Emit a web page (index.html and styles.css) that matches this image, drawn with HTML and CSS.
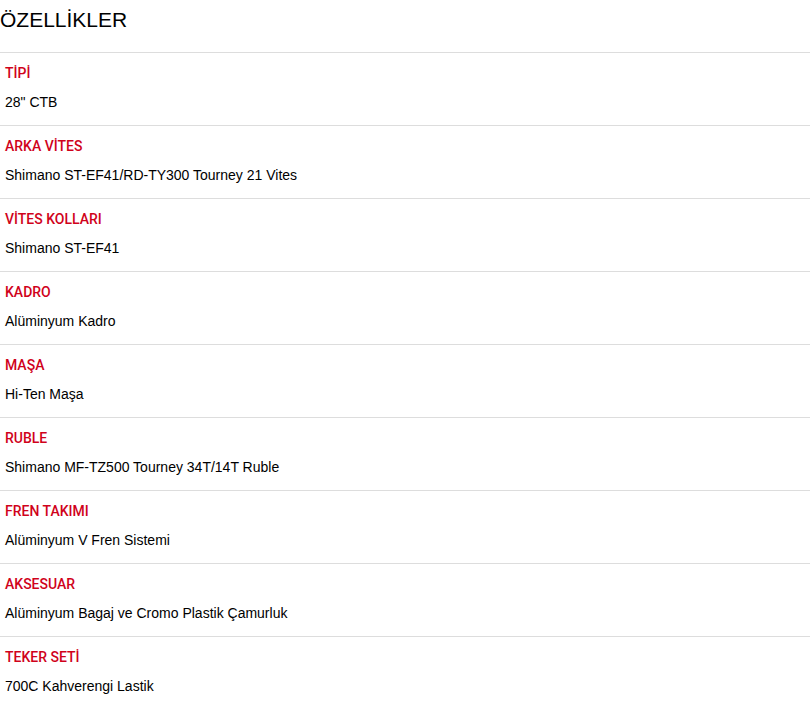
FILE: index.html
```html
<!DOCTYPE html>
<html lang="tr">
<head>
<meta charset="utf-8">
<title>Özellikler</title>
<link rel="stylesheet" href="styles.css">
</head>
<body>
<h2 class="title">ÖZELLİKLER</h2>
<div class="specs">
  <div class="row"><div class="label">TİPİ</div><div class="value">28" CTB</div></div>
  <div class="row"><div class="label">ARKA VİTES</div><div class="value">Shimano ST-EF41/RD-TY300 Tourney 21 Vites</div></div>
  <div class="row"><div class="label">VİTES KOLLARI</div><div class="value">Shimano ST-EF41</div></div>
  <div class="row"><div class="label">KADRO</div><div class="value">Alüminyum Kadro</div></div>
  <div class="row"><div class="label">MAŞA</div><div class="value">Hi-Ten Maşa</div></div>
  <div class="row"><div class="label">RUBLE</div><div class="value">Shimano MF-TZ500 Tourney 34T/14T Ruble</div></div>
  <div class="row"><div class="label">FREN TAKIMI</div><div class="value">Alüminyum V Fren Sistemi</div></div>
  <div class="row"><div class="label">AKSESUAR</div><div class="value">Alüminyum Bagaj ve Cromo Plastik Çamurluk</div></div>
  <div class="row"><div class="label">TEKER SETİ</div><div class="value">700C Kahverengi Lastik</div></div>
</div>
</body>
</html>
```
FILE: styles.css
```css
html, body {
  margin: 0;
  padding: 0;
  background: #fff;
}
body {
  font-family: "Liberation Sans", Arial, sans-serif;
  color: #000;
}
.title {
  margin: 8px 0 21px;
  font-size: 21px;
  line-height: 23px;
  font-weight: 400;
}
.specs {
  display: flex;
  flex-direction: column;
}
.row {
  border-top: 1px solid #dddddd;
  padding: 10px 5px 13px;
  display: flex;
  flex-direction: column;
  gap: 9px;
}
.label {
  font-family: Roboto, "Noto Sans", sans-serif;
  font-weight: 500;
  font-size: 14px;
  line-height: 20px;
  color: #d0021b;
}
.value {
  font-size: 14px;
  line-height: 20px;
}
```
